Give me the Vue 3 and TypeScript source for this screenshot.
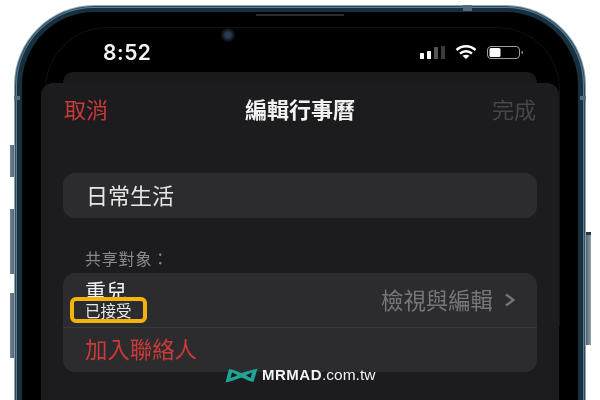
<script setup lang="ts">
const bars = [
  { x: 0, y: 7, h: 6, fill: "#fff" },
  { x: 7, y: 5, h: 8, fill: "#fff" },
  { x: 14, y: 1, h: 12, fill: "#555" },
  { x: 21, y: 0, h: 13, fill: "#3c3c3c" },
];
</script>

<template>
  <main class="page">
    <i class="side-btn mute"></i>
    <i class="side-btn vol-up"></i>
    <i class="side-btn vol-down"></i>
    <i class="side-btn power"></i>

    <div class="phone">
      <i class="screen-edge"></i>
      <i class="band band-top"></i>
      <i class="band band-left"></i>
      <i class="band band-right"></i>
      <i class="speaker"></i>
      <i class="camera"></i>

      <div class="status">
        <span class="clock">8:52</span>
        <div class="status-icons">
          <svg width="25" height="13" viewBox="0 0 25 13">
            <rect
              v-for="b in bars"
              :key="b.x"
              :x="b.x"
              :y="b.y"
              width="4"
              :height="b.h"
              rx="0.6"
              :fill="b.fill"
            />
          </svg>
          <svg width="22" height="14" viewBox="0 0 22 14" fill="none" stroke="#fff" stroke-width="2.4">
            <path d="M1.500 5C7 0 15 0 20.500 5" />
            <path d="M5 8.500C8.500 5.500 13.500 5.500 17 8.500" />
            <path d="M11 14L7.500 10.800C9.500 9.300 12.500 9.300 14.500 10.800Z" fill="#fff" stroke="none" />
          </svg>
          <svg width="36" height="13" viewBox="0 0 36 13">
            <rect x="0.500" y="0.500" width="32" height="12" rx="3.500" fill="none" stroke="#a0a0a0" />
            <rect x="2.500" y="2" width="11" height="9" rx="1.500" fill="#fff" />
            <rect x="34.500" y="5" width="1.500" height="3" rx="0.700" fill="#8a8a8a" />
          </svg>
        </div>
      </div>

      <div class="sheet-behind"></div>

      <section class="sheet">
        <header class="sheet-head">
          <span class="cancel">取消</span>
          <span class="title">編輯行事曆</span>
          <span class="done">完成</span>
        </header>

        <div class="card field">日常生活</div>

        <p class="label">共享對象：</p>

        <div class="card list">
          <div class="row person">
            <span class="name">重兒</span>
            <span class="perm">檢視與編輯</span>
            <svg class="chevron" width="10" height="14" viewBox="0 0 10 14" fill="none" stroke="#77777a" stroke-width="2.2">
              <path d="M1 1.500L8.500 7L1 12.500" />
            </svg>
            <div class="accepted">已接受</div>
          </div>
          <div class="row add">加入聯絡人</div>
        </div>
      </section>
    </div>

    <div class="mark">
      <svg width="33" height="15" viewBox="0 0 33 15">
        <path
          fill="#1fa595"
          fill-rule="evenodd"
          d="M4 1C9 1.500 13 4 16.500 5C20 4 26 2 32.500 0.500L28.500 14C24 13.500 20 10.500 16.500 9.500C12 11 6 13.500 0.500 14.500ZM7 4.500L5.500 10C8 9.300 10.500 8.300 12.500 7.300C11 6.300 9 5.200 7 4.500ZM27 4.500C25 5.200 23 6.300 21 7.300C22.500 8.300 24 9.300 25.800 10Z"
        />
      </svg>
      <span class="mark-text"><b>MRMAD</b>.com.tw</span>
    </div>
  </main>
</template>

<style>
html,
body {
  margin: 0;
  background: #fff;
}
</style>

<style scoped>
.page {
  position: relative;
  width: 600px;
  height: 400px;
  overflow: hidden;
  box-sizing: border-box;
  padding: 8px 17px 0;
  background: #fff;
  font-family: "Noto Sans CJK TC", "Liberation Sans", sans-serif;
  filter: blur(0.35px);
}

.side-btn {
  position: absolute;
  width: 5px;
  background: linear-gradient(90deg, #75838e, #4f606d);
}
.mute { left: 10px; top: 145px; height: 32px; }
.vol-up { left: 10px; top: 209px; height: 65px; }
.vol-down { left: 10px; top: 293px; height: 65px; }
.power {
  right: 9px;
  top: 232px;
  height: 110px;
  border-top: 3px solid #26343f;
  background: linear-gradient(90deg, #4f606d, #93a2ab);
}

.phone {
  position: relative;
  box-sizing: border-box;
  height: 430px;
  border: solid #17303f;
  border-width: 4px 5px 4px 5px;
  border-radius: 77px 77px 0 0;
  background: #000;
  box-shadow: 0 0 0 1px #5d7a8c, 0 0 0 2px #2c4f66, 0 0 0 3px #8fa3af;
}

.screen-edge {
  position: absolute;
  left: 23px;
  right: 18px;
  top: 15px;
  height: 300px;
  box-sizing: border-box;
  border: 1px solid #111;
  border-radius: 62px 62px 0 0;
}

.band {
  position: absolute;
  background: #56697a;
}
.band-top { right: 106px; top: -7px; width: 9px; height: 6px; }
.band-left { left: -8px; top: 84px; width: 6px; height: 4px; }
.band-right { right: -8px; top: 84px; width: 6px; height: 4px; }

.speaker {
  position: absolute;
  left: 234px;
  top: 2px;
  width: 88px;
  height: 2px;
  background: #2b2b2b;
}

.camera {
  position: absolute;
  left: 199px;
  top: 16px;
  width: 14px;
  height: 14px;
  border-radius: 50%;
  background: radial-gradient(circle, #2a3c55 0 25%, #0b1518 60%, #050708 100%);
}

.status {
  position: relative;
  display: flex;
  align-items: center;
  justify-content: space-between;
  box-sizing: border-box;
  height: 60px;
  padding: 20px 55px 0 81px;
}

.clock {
  color: #f4f4f4;
  font-family: Inter, "Liberation Sans", sans-serif;
  font-size: 21px;
  font-weight: 600;
  letter-spacing: 0.500px;
}

.status-icons {
  display: flex;
  align-items: center;
  gap: 10px;
}

.sheet-behind {
  position: relative;
  height: 11px;
  margin: 0 41px;
  border-radius: 10px 10px 0 0;
  background: #1a1a1b;
}

.sheet {
  position: relative;
  height: 340px;
  margin: 0 19px;
  border-radius: 12px 12px 0 0;
  background: #1c1c1e;
}

.sheet-head {
  display: flex;
  align-items: center;
  justify-content: space-between;
  box-sizing: border-box;
  height: 54px;
  padding: 0 23px 4px 23px;
  font-size: 22px;
  line-height: 1;
}

.cancel {
  color: #c93a39;
}

.title {
  flex: 1;
  color: #f2f2f2;
  font-weight: 700;
  font-size: 22px;
  text-align: center;
}

.done {
  color: #474749;
}

.card {
  margin: 0 22px;
  border-radius: 12px;
  background: #2c2c2e;
}

.field {
  display: flex;
  align-items: center;
  box-sizing: border-box;
  height: 45px;
  margin-top: 36px;
  padding: 0 0 4px 23px;
  color: #e6e6e6;
  font-size: 22px;
}

.label {
  height: 20px;
  margin: 30px 22px 5px;
  padding-left: 22px;
  color: #8a8a8c;
  font-size: 16px;
  line-height: 20px;
  letter-spacing: 0.800px;
}

.list {
  height: 99px;
}

.row {
  display: flex;
  box-sizing: border-box;
  padding-left: 22px;
}

.person {
  position: relative;
  align-items: center;
  height: 55px;
  padding-right: 22px;
  border-bottom: 1px solid #3a3a3c;
}

.name {
  flex: 1;
  align-self: flex-start;
  margin-top: 5px;
  color: #f0f0f0;
  font-size: 21px;
  line-height: 24px;
}

.perm {
  margin: 0 12px 3px 0;
  color: #77777a;
  font-size: 22.400px;
}

.accepted {
  position: absolute;
  left: 7px;
  top: 24px;
  box-sizing: border-box;
  width: 77px;
  height: 26px;
  padding-left: 11px;
  border: 4px solid #f4b30c;
  border-radius: 6px;
  background: #2c2c2e;
  color: #e8e8e8;
  font-size: 15.500px;
  line-height: 18px;
}

.add {
  align-items: center;
  height: 44px;
  padding-bottom: 4px;
  color: #c93a39;
  font-size: 22.400px;
}

.mark {
  position: absolute;
  left: 225px;
  top: 366px;
  display: flex;
  align-items: center;
  gap: 4px;
  color: #f2f2f2;
  font-family: "Liberation Sans", Arial, sans-serif;
  font-size: 15.500px;
}

.mark-text b {
  font-size: 15px;
  letter-spacing: 0.500px;
}
</style>
